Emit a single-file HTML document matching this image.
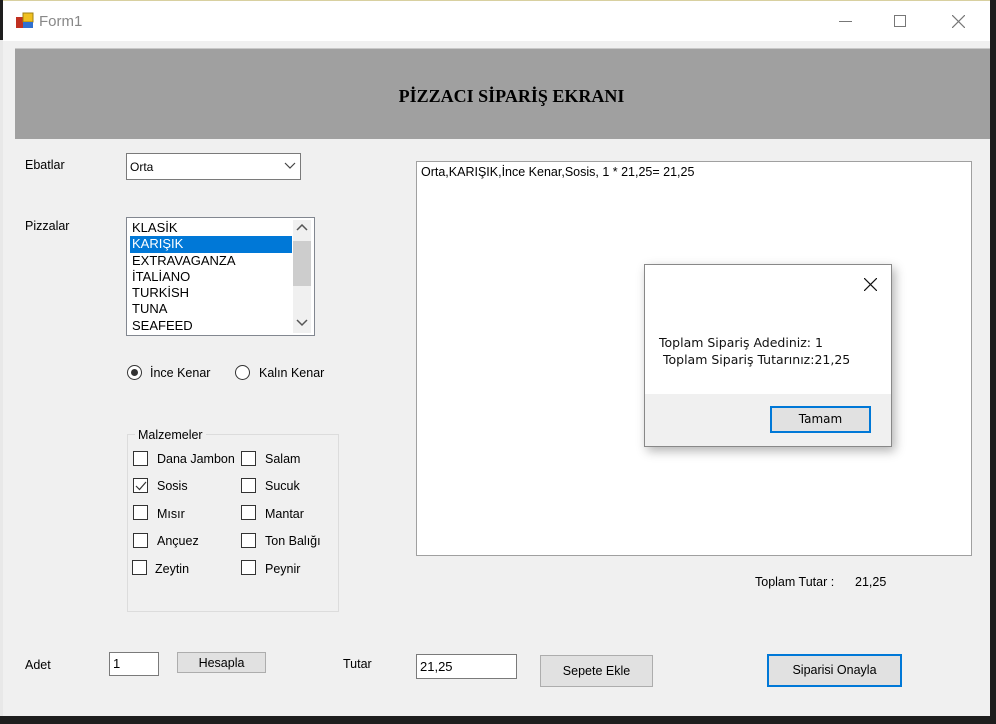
<!DOCTYPE html>
<html><head><meta charset="utf-8"><style>
*{box-sizing:border-box;margin:0;padding:0}
body{width:996px;height:724px;background:#1e1e1e;position:relative;overflow:hidden;font-family:"Liberation Sans",sans-serif;font-size:12px;color:#000}
.a{position:absolute}
.win{left:3px;top:0;width:987px;height:716px;background:#f0f0f0;border-top:1px solid #d8d0a0}
.tb{left:0;top:0;width:987px;height:40px;background:#fff}
.box{background:#fff;border:1px solid #7a7a7a}
.btn{background:#e1e1e1;border:1px solid #adadad;text-align:center}
.cb{width:15px;height:15px;border:1px solid #333;background:#fff}
.lbl{font-size:12.5px}
</style></head><body>
<div class="a win">
 <div class="a tb">
  <svg class="a" style="left:13px;top:11px" width="18" height="18"><rect x="0" y="5" width="8" height="11" fill="#c03020"/><rect x="7" y="1" width="10" height="9" fill="#f0c020" stroke="#a08010"/><rect x="7" y="10" width="10" height="6" fill="#3070d0"/></svg>
  <div class="a" style="left:36px;top:12px;font-size:15px;color:#888">Form1</div>
  <div class="a" style="left:836px;top:20px;width:13px;height:1px;background:#777"></div>
  <div class="a" style="left:891px;top:14px;width:12px;height:12px;border:1px solid #777"></div>
  <svg class="a" style="left:949px;top:14px" width="13" height="13"><path d="M0 0L13 13M13 0L0 13" stroke="#777" stroke-width="1.2"/></svg>
 </div>
</div>
<div class="a" style="left:0;top:40px;width:3px;height:676px;background:#e8e8e8"></div>
<div class="a" style="left:15px;top:48px;width:975px;height:91px;background:#a0a0a0;border-top:1px solid #c8c8c8"></div>
<div class="a" style="left:15px;top:86px;width:993px;text-align:center;font-family:'Liberation Serif',serif;font-weight:bold;font-size:18px">PİZZACI SİPARİŞ EKRANI</div>

<div class="a lbl" style="left:25px;top:158px">Ebatlar</div>
<div class="a box" style="left:126px;top:153px;width:175px;height:27px;border-color:#7a7a7a"><span class="a" style="left:3px;top:6px">Orta</span>
<svg class="a" style="left:157px;top:8px" width="12" height="8"><path d="M1 1L6 6L11 1" stroke="#444" fill="none" stroke-width="1.2"/></svg></div>

<div class="a lbl" style="left:25px;top:219px">Pizzalar</div>
<div class="a box" style="left:126px;top:217px;width:189px;height:119px;border-color:#828790;line-height:16.3px;font-size:13px">
 <div class="a" style="left:3px;top:2px;width:162px">
  <div style="padding-left:2px">KLASİK</div>
  <div style="padding-left:2px;background:#0078d7;color:#fff">KARIŞIK</div>
  <div style="padding-left:2px">EXTRAVAGANZA</div>
  <div style="padding-left:2px">İTALİANO</div>
  <div style="padding-left:2px">TURKİSH</div>
  <div style="padding-left:2px">TUNA</div>
  <div style="padding-left:2px">SEAFEED</div>
 </div>
 <div class="a" style="left:166px;top:2px;width:18px;height:113px;background:#f0f0f0"></div>
 <div class="a" style="left:166px;top:23px;width:18px;height:45px;background:#cdcdcd"></div>
 <svg class="a" style="left:169px;top:6px" width="12" height="8"><path d="M1 6L6 1L11 6" stroke="#555" fill="none" stroke-width="1.5"/></svg>
 <svg class="a" style="left:169px;top:101px" width="12" height="8"><path d="M1 1L6 6L11 1" stroke="#555" fill="none" stroke-width="1.5"/></svg>
</div>

<div class="a" style="left:127px;top:365px;width:15px;height:15px;border:1px solid #333;border-radius:50%;background:#fff"><div class="a" style="left:3px;top:3px;width:7px;height:7px;border-radius:50%;background:#333"></div></div>
<div class="a lbl" style="left:150px;top:366px">İnce Kenar</div>
<div class="a" style="left:235px;top:365px;width:15px;height:15px;border:1px solid #333;border-radius:50%;background:#fff"></div>
<div class="a lbl" style="left:259px;top:366px">Kalın Kenar</div>

<div class="a" style="left:127px;top:434px;width:212px;height:178px;border:1px solid #dcdcdc"></div>
<div class="a lbl" style="left:135px;top:428px;background:#f0f0f0;padding:0 3px">Malzemeler</div>
<div class="a cb" style="left:133px;top:451px"></div><div class="a lbl" style="left:157px;top:452px">Dana Jambon</div>
<div class="a cb" style="left:133px;top:478px"><svg class="a" style="left:1px;top:1px" width="12" height="12"><path d="M1 6L4.5 9.5L11 2" stroke="#333" fill="none" stroke-width="1.2"/></svg></div><div class="a lbl" style="left:157px;top:479px">Sosis</div>
<div class="a cb" style="left:133px;top:505px"></div><div class="a lbl" style="left:157px;top:507px">Mısır</div>
<div class="a cb" style="left:133px;top:533px"></div><div class="a lbl" style="left:157px;top:534px">Ançuez</div>
<div class="a cb" style="left:132px;top:560px"></div><div class="a lbl" style="left:155px;top:562px">Zeytin</div>
<div class="a cb" style="left:241px;top:451px"></div><div class="a lbl" style="left:265px;top:452px">Salam</div>
<div class="a cb" style="left:241px;top:478px"></div><div class="a lbl" style="left:265px;top:479px">Sucuk</div>
<div class="a cb" style="left:241px;top:505px"></div><div class="a lbl" style="left:265px;top:507px">Mantar</div>
<div class="a cb" style="left:241px;top:533px"></div><div class="a lbl" style="left:265px;top:534px">Ton Balığı</div>
<div class="a cb" style="left:241px;top:560px"></div><div class="a lbl" style="left:265px;top:562px">Peynir</div>

<div class="a box" style="left:416px;top:161px;width:556px;height:395px;border-color:#a0a0a0"><span class="a" style="left:4px;top:3px;font-size:12.5px">Orta,KARIŞIK,İnce Kenar,Sosis, 1 * 21,25= 21,25</span></div>

<div class="a" style="left:644px;top:264px;width:248px;height:183px;background:#fff;border:1px solid #888;box-shadow:3px 4px 10px rgba(0,0,0,.3)">
 <svg class="a" style="left:219px;top:13px" width="13" height="13"><path d="M0 0L13 13M13 0L0 13" stroke="#111" stroke-width="1.2"/></svg>
 <div class="a" style="left:14px;top:69px;line-height:17px;white-space:pre;font-family:'DejaVu Sans',sans-serif;font-size:12.5px;color:#111">Toplam Sipariş Adediniz: 1
 Toplam Sipariş Tutarınız:21,25</div>
 <div class="a" style="left:0;top:129px;width:246px;height:52px;background:#f0f0f0"></div>
 <div class="a" style="left:125px;top:141px;width:101px;height:27px;background:#e1e1e1;border:2px solid #0078d7;text-align:center;line-height:23px;font-family:'DejaVu Sans',sans-serif;font-size:12px">Tamam</div>
</div>

<div class="a lbl" style="left:755px;top:575px">Toplam Tutar :</div>
<div class="a lbl" style="left:855px;top:575px">21,25</div>

<div class="a lbl" style="left:25px;top:658px">Adet</div>
<div class="a box" style="left:109px;top:652px;width:50px;height:24px"><span class="a" style="left:3px;top:3px;font-size:13px">1</span></div>
<div class="a btn" style="left:177px;top:652px;width:89px;height:21px;line-height:20px;font-size:12.5px">Hesapla</div>
<div class="a lbl" style="left:343px;top:657px">Tutar</div>
<div class="a box" style="left:416px;top:654px;width:101px;height:25px"><span class="a" style="left:3px;top:4px;font-size:13px">21,25</span></div>
<div class="a btn" style="left:540px;top:655px;width:113px;height:32px;line-height:30px;font-size:12.5px">Sepete Ekle</div>
<div class="a" style="left:767px;top:654px;width:135px;height:33px;background:#e1e1e1;border:2px solid #0078d7;text-align:center;line-height:29px;font-size:12.5px">Siparisi Onayla</div>
</body></html>
